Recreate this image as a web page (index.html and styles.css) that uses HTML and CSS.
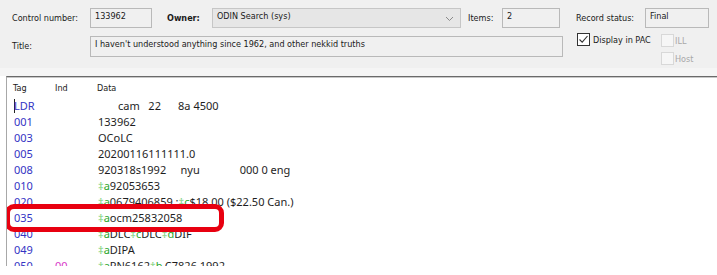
FILE: index.html
```html
<!DOCTYPE html>
<html lang="en">
<head>
    <meta charset="UTF-8">
    <title>MARC Editor</title>
    <link rel="stylesheet" href="styles.css">
</head>
<body>

<!-- Record header -->
<div class="record-head">
    <div class="head-row">
        <label class="lbl lbl-control">Control number:</label>
        <div class="field f-control">133962</div>
        <label class="lbl lbl-owner">Owner:</label>
        <div class="field f-owner">
            <span>ODIN Search (sys)</span>
            <svg class="chevron" width="9" height="6" viewBox="0 0 9 6"><path d="M1 1 L4.5 4.5 L8 1" fill="none" stroke="#8a8a8a" stroke-width="1"/></svg>
        </div>
        <label class="lbl lbl-items">Items:</label>
        <div class="field f-items">2</div>
        <label class="lbl lbl-status">Record status:</label>
        <div class="field f-status">Final</div>
    </div>
    <div class="head-row row-two">
        <label class="lbl lbl-control">Title:</label>
        <div class="field f-title">I haven't understood anything since 1962, and other nekkid truths</div>
        <div class="flags">
            <div class="flag flag-pac">
                <span class="box checked">
                    <svg width="11" height="11" viewBox="0 0 11 11"><path d="M1.5 5.5 L4.2 8.2 L9.5 2" fill="none" stroke="#333" stroke-width="1.1"/></svg>
                </span>
                <span>Display in PAC</span>
            </div>
            <div class="flag-col">
                <div class="flag off"><span class="box"></span><span>ILL</span></div>
                <div class="flag off"><span class="box"></span><span>Host</span></div>
            </div>
        </div>
    </div>
</div>
<div class="head-gap"></div>

<!-- MARC fields -->
<div class="marc">
    <div class="marc-row marc-cols">
        <span class="c-tag">Tag</span><span class="c-ind">Ind</span><span class="c-data">Data</span>
    </div>
    <div class="marc-row"><span class="c-tag tag"><span class="caret"></span>LDR</span><span class="c-ind"></span><span class="c-data pre">       cam   22      8a 4500</span></div>
    <div class="marc-row"><span class="c-tag tag">001</span><span class="c-ind"></span><span class="c-data">133962</span></div>
    <div class="marc-row"><span class="c-tag tag">003</span><span class="c-ind"></span><span class="c-data">OCoLC</span></div>
    <div class="marc-row"><span class="c-tag tag">005</span><span class="c-ind"></span><span class="c-data">20200116111111.0</span></div>
    <div class="marc-row"><span class="c-tag tag">008</span><span class="c-ind"></span><span class="c-data pre">920318s1992     nyu              000 0 eng</span></div>
    <div class="marc-row"><span class="c-tag tag">010</span><span class="c-ind"></span><span class="c-data"><i class="dl">‡</i><b class="sf">a</b>92053653</span></div>
    <div class="marc-row"><span class="c-tag tag">020</span><span class="c-ind"></span><span class="c-data"><i class="dl">‡</i><b class="sf">a</b>0679406859 :<i class="dl">‡</i><b class="sf">c</b>$18.00 ($22.50 Can.)</span></div>
    <div class="marc-row"><span class="c-tag tag">035</span><span class="c-ind"></span><span class="c-data"><i class="dl">‡</i><b class="sf">a</b>ocm25832058</span></div>
    <div class="marc-row"><span class="c-tag tag">040</span><span class="c-ind"></span><span class="c-data"><i class="dl">‡</i><b class="sf">a</b>DLC<i class="dl">‡</i><b class="sf">c</b>DLC<i class="dl">‡</i><b class="sf">d</b>DIF</span></div>
    <div class="marc-row"><span class="c-tag tag">049</span><span class="c-ind"></span><span class="c-data"><i class="dl">‡</i><b class="sf">a</b>DIPA</span></div>
    <div class="marc-row"><span class="c-tag tag">050</span><span class="c-ind ind">00</span><span class="c-data"><i class="dl">‡</i><b class="sf">a</b>PN6162<i class="dl">‡</i><b class="sf">b</b>.C7826 1992</span></div>

    <!-- highlight drawn over the 035 row -->
    <div class="highlight"></div>
</div>

</body>
</html>
```

FILE: styles.css
```css
html, body {
    margin: 0;
    padding: 0;
    background-color: #fff;
    height: 275px;
    overflow: hidden;
}
.record-head {
    background-color: #f0f0f0;
    height: 60px;
    padding: 8px 0 0 12px;
    font-family: "DejaVu Sans Condensed", "DejaVu Sans", sans-serif;
    font-size: 9px;
    color: #1a1a1a;
}
.head-gap {
    height: 8px;
    background-color: #f5f5f5;
}
.head-row {
    display: flex;
    align-items: center;
    height: 20px;
}
.row-two {
    margin-top: 8px;
    align-items: flex-start;
    height: 32px;
}
.lbl {
    flex: none;
}
.lbl-control { width: 78px; }
.row-two .lbl-control { line-height: 21px; }
.lbl-owner {
    margin-left: 15px;
    width: 45px;
    font-weight: bold;
}
.lbl-items {
    margin-left: 7px;
    width: 34px;
}
.lbl-status {
    margin-left: 16px;
    width: 69px;
}
.field {
    box-sizing: border-box;
    height: 20px;
    border: 1px solid #b9b9b9;
    background-color: #f0f0f0;
    padding: 0 0 0 4px;
    line-height: 15px;
    flex: none;
}
.f-control { width: 62px; }
.f-owner {
    width: 249px;
    background-color: #e6e6e6;
    border-color: #c6c6c6;
    display: flex;
    justify-content: space-between;
    align-items: flex-start;
}
.chevron {
    margin: 7px 6px 0 0;
}
.f-items { width: 58px; }
.f-status { width: 64px; }
.f-title {
    width: 473px;
    height: 21px;
}
.flags {
    display: flex;
    margin: -3px 0 0 14px;
}
.flag {
    display: flex;
    align-items: center;
    height: 13px;
    gap: 3px;
}
.flag-pac {
    width: 84px;
}
.flag-col {
    display: flex;
    flex-direction: column;
    gap: 5px;
    margin-top: 1px;
}
.box {
    box-sizing: border-box;
    width: 13px;
    height: 13px;
    border: 1px solid #d8d8d8;
    background-color: #f6f6f6;
    display: flex;
    align-items: center;
    justify-content: center;
}
.box.checked {
    border-color: #333;
    background-color: #fff;
}
.off {
    color: #a8a8a8;
}
.off .box {
    margin-right: -2px;
}
.marc {
    position: relative;
    margin-left: 6px;
    height: 189px;
    border-top: 1px solid #6a6a6a;
    border-left: 1px solid #a8a8a8;
    box-shadow: inset 0 1px 0 #c8c8c8;
    overflow: hidden;
    font-family: "Noto Sans", "Open Sans", sans-serif;
    font-size: 11px;
    color: #1e1e1e;
}
.marc-row {
    display: flex;
    height: 16px;
    line-height: 16px;
    white-space: nowrap;
}
.marc-cols {
    height: 21px;
    line-height: 23px;
    font-family: "DejaVu Sans Condensed", "DejaVu Sans", sans-serif;
    font-size: 9px;
    color: #1a1a1a;
}
.c-tag {
    width: 42px;
    padding-left: 6px;
    flex: none;
}
.c-ind {
    width: 42px;
    padding-left: 1px;
    flex: none;
}
.marc-cols .c-ind { padding-left: 0; }
.pre {
    white-space: pre;
}
.tag {
    color: #3434c4;
    padding-left: 7px;
    width: 41px;
}
.caret {
    display: inline-block;
    width: 1px;
    height: 14px;
    background-color: #222;
    vertical-align: -3px;
    margin-right: -1px;
}
.ind {
    color: #d838c8;
    padding-left: 0;
    width: 43px;
}
.dl {
    font-style: normal;
    color: #7ad07a;
}
.sf {
    font-weight: normal;
    color: #2aa52a;
}
.highlight {
    position: absolute;
    left: -2px;
    top: 127px;
    width: 209px;
    height: 18px;
    border: 5px solid #e80010;
    border-radius: 9px;
}
```
